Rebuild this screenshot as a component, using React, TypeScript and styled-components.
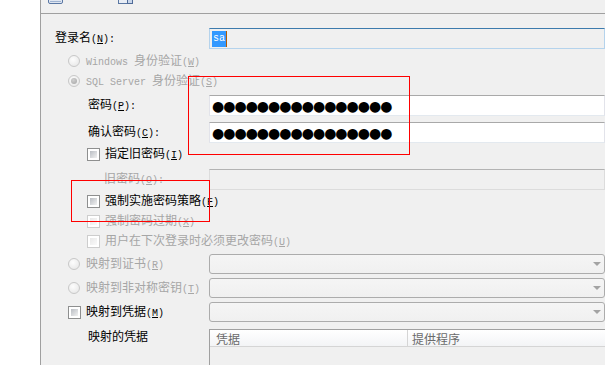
import styled, { createGlobalStyle } from 'styled-components';

const GlobalStyle = createGlobalStyle`
  html, body {
    margin: 0;
    padding: 0;
    background: #fff;
  }
  body {
    color: #000;
    font-family: "Noto Sans CJK SC", "Noto Sans", sans-serif;
    font-size: 12px;
    line-height: 14px;
  }
`;

const Window = styled.div`
  background: #fff;
  display: flex;
  height: 365px;
  overflow: hidden;
  position: relative;
  width: 605px;
`;

const Gutter = styled.div`
  background: #fff;
  flex: none;
  width: 40px;
`;

const Panel = styled.div`
  background: #f0f0f0;
  border-left: 1px solid #a0a0a0;
  display: flex;
  flex: 1;
  flex-direction: column;
  min-width: 0;
`;

const Toolbar = styled.div`
  align-items: flex-start;
  border-bottom: 1px solid #a0a0a0;
  display: flex;
  flex: none;
  gap: 55px;
  height: 13px;
  overflow: hidden;
  padding-left: 7px;
`;

const ToolIcon = styled.svg`
  flex: none;
  margin-top: -12px;
`;

const Form = styled.div`
  display: flex;
  flex: 1;
  flex-direction: column;
  padding-top: 14px;
`;

const Row = styled.div<{ $h: number; $mt: number }>`
  align-items: center;
  display: flex;
  flex: none;
  height: ${({ $h }) => $h}px;
  margin-top: ${({ $mt }) => $mt}px;
`;

const Lead = styled.div<{ $indent: number; $wide?: boolean; $top?: boolean }>`
  align-items: center;
  align-self: ${({ $top }) => ($top ? 'flex-start' : 'center')};
  box-sizing: border-box;
  display: flex;
  flex: none;
  gap: 5px;
  padding-left: ${({ $indent }) => $indent}px;
  white-space: nowrap;
  width: ${({ $wide }) => ($wide ? 'auto' : '168px')};
`;

const Text = styled.span<{ $disabled?: boolean }>`
  color: ${({ $disabled }) => ($disabled ? '#a6a6a6' : '#000')};
`;

const Lat = styled.span`
  font-family: "Liberation Mono", monospace;
  font-size: 10px;
`;

const Check = styled.span<{ $disabled?: boolean }>`
  background: #fff;
  border: 1px solid ${({ $disabled }) => ($disabled ? '#cdcdcd' : '#8e8f8f')};
  box-sizing: border-box;
  flex: none;
  height: 13px;
  padding: 2px;
  width: 13px;

  &::before {
    background: ${({ $disabled }) =>
      $disabled
        ? 'linear-gradient(135deg, #e8e8e8, #fafafa)'
        : 'linear-gradient(135deg, #b9bdc3, #f2f2f2)'};
    content: '';
    display: block;
    height: 100%;
    width: 100%;
  }
`;

const Radio = styled.span<{ $checked?: boolean }>`
  align-items: center;
  background: radial-gradient(circle at 40% 35%, #fdfdfd, #e4e4e4);
  border: 1px solid #c8c8c8;
  border-radius: 50%;
  box-sizing: border-box;
  display: flex;
  flex: none;
  height: 12px;
  justify-content: center;
  margin-right: 1px;
  width: 12px;

  &::after {
    background: radial-gradient(circle at 40% 35%, #d0d0d0, #a4a4a4);
    border-radius: 50%;
    content: '';
    display: ${({ $checked }) => ($checked ? 'block' : 'none')};
    height: 6px;
    width: 6px;
  }
`;

const TextBox = styled.div<{ $variant: 'focus' | 'normal' | 'disabled' }>`
  align-items: center;
  align-self: stretch;
  background: ${({ $variant }) => ($variant === 'normal' ? '#fff' : '#f0f0f0')};
  border: 1px solid;
  border-color: ${({ $variant }) =>
    $variant === 'focus'
      ? '#3d7bad #b5d3ec #b5d3ec #b5d3ec'
      : $variant === 'normal'
        ? '#a9a9a9 #e2e3ea #e3e9ef #e2e3ea'
        : '#b3b3b3 #dcdcdc #dcdcdc #dcdcdc'};
  box-sizing: border-box;
  display: flex;
  flex: 1;
  padding-left: 2px;
`;

const Selected = styled.span`
  background: #3399ff;
  color: #fff;
  font-family: "Liberation Mono", monospace;
  font-size: 10px;
  height: 16px;
  line-height: 16px;
  padding: 0 1px 0 1px;
  position: relative;

  &::after {
    background: #b35a00;
    content: '';
    height: 16px;
    position: absolute;
    right: -1px;
    top: 0;
    width: 1px;
  }
`;

const Dots = styled.span`
  font-family: "DejaVu Sans", sans-serif;
  font-size: 14px;
  letter-spacing: -1px;
  line-height: 16px;
`;

const Combo = styled.div`
  align-items: center;
  align-self: stretch;
  background: linear-gradient(#f5f5f5, #f0f0f0);
  border: 1px solid #acacac;
  border-radius: 3px;
  box-sizing: border-box;
  display: flex;
  flex: 1;
  justify-content: flex-end;
  padding-right: 3px;
`;

const Arrow = styled.span`
  border-left: 4px solid transparent;
  border-right: 4px solid transparent;
  border-top: 4px solid #a3a3a3;
  height: 0;
  width: 0;
`;

const List = styled.div`
  align-self: stretch;
  background: #f0f0f0;
  border-left: 1px solid #a0a0a0;
  border-top: 1px solid #a0a0a0;
  flex: 1;
`;

const ListHead = styled.div`
  background: linear-gradient(#ffffff, #f3f4f6);
  border-bottom: 1px solid #d5d5d5;
  display: flex;
  height: 16px;
`;

const HeadCell = styled.div<{ $w?: number; $pad: number }>`
  border-right: ${({ $w }) => ($w ? '1px solid #d5d5d5' : 'none')};
  box-sizing: border-box;
  color: #6a6a6a;
  flex: ${({ $w }) => ($w ? 'none' : '1')};
  line-height: 17px;
  padding-left: ${({ $pad }) => $pad}px;
  width: ${({ $w }) => ($w ? `${$w}px` : 'auto')};
`;

const Mark = styled.div`
  border: 1px solid #ff0000;
  box-sizing: border-box;
  pointer-events: none;
  position: absolute;
`;

const Key = ({ k, colon }: { k: string; colon?: boolean }) => (
  <Lat>
    (<u>{k}</u>){colon ? ':' : ''}
  </Lat>
);

const DocIcon = () => (
  <ToolIcon width="15" height="16" viewBox="0 0 15 16">
    <rect x="0.5" y="3.5" width="14" height="12" rx="1.5" fill="#dfe6f1" stroke="#5a77a3" />
    <rect x="2" y="13" width="11" height="1" fill="#9fb3d1" />
  </ToolIcon>
);

const ScriptIcon = () => (
  <ToolIcon width="15" height="16" viewBox="0 0 15 16">
    <rect x="0.5" y="2.5" width="10" height="13" fill="#e8edf5" stroke="#5a77a3" />
    <rect x="9.5" y="8.5" width="5" height="7" fill="#c9d6ea" stroke="#4f6b98" />
  </ToolIcon>
);

export default function App() {
  return (
    <>
      <GlobalStyle />
      <Window>
        <Gutter />
        <Panel>
          <Toolbar>
            <DocIcon />
            <ScriptIcon />
          </Toolbar>
          <Form>
            <Row $h={21} $mt={0}>
              <Lead $indent={14}>
                <Text>
                  登录名<Key k="N" colon />
                </Text>
              </Lead>
              <TextBox $variant="focus">
                <Selected>sa</Selected>
              </TextBox>
            </Row>

            <Row $h={20} $mt={2}>
              <Lead $indent={27} $wide>
                <Radio />
                <Text $disabled>
                  <Lat>Windows </Lat>身份验证<Key k="W" />
                </Text>
              </Lead>
            </Row>

            <Row $h={20} $mt={0}>
              <Lead $indent={27} $wide>
                <Radio $checked />
                <Text $disabled>
                  <Lat>SQL Server </Lat>身份验证<Key k="S" />
                </Text>
              </Lead>
            </Row>

            <Row $h={21} $mt={4}>
              <Lead $indent={47}>
                <Text>
                  密码<Key k="P" colon />
                </Text>
              </Lead>
              <TextBox $variant="normal">
                <Dots>●●●●●●●●●●●●●●●●</Dots>
              </TextBox>
            </Row>

            <Row $h={21} $mt={6}>
              <Lead $indent={47}>
                <Text>
                  确认密码<Key k="C" colon />
                </Text>
              </Lead>
              <TextBox $variant="normal">
                <Dots>●●●●●●●●●●●●●●●●</Dots>
              </TextBox>
            </Row>

            <Row $h={20} $mt={1}>
              <Lead $indent={46} $wide>
                <Check />
                <Text>
                  指定旧密码<Key k="I" />
                </Text>
              </Lead>
            </Row>

            <Row $h={21} $mt={5}>
              <Lead $indent={63}>
                <Text $disabled>
                  旧密码<Key k="O" colon />
                </Text>
              </Lead>
              <TextBox $variant="disabled" />
            </Row>

            <Row $h={20} $mt={1}>
              <Lead $indent={46} $wide>
                <Check />
                <Text>
                  强制实施密码策略<Key k="F" />
                </Text>
              </Lead>
            </Row>

            <Row $h={20} $mt={0}>
              <Lead $indent={46} $wide>
                <Check $disabled />
                <Text $disabled>
                  强制密码过期<Key k="X" />
                </Text>
              </Lead>
            </Row>

            <Row $h={20} $mt={0}>
              <Lead $indent={46} $wide>
                <Check $disabled />
                <Text $disabled>
                  用户在下次登录时必须更改密码<Key k="U" />
                </Text>
              </Lead>
            </Row>

            <Row $h={20} $mt={3}>
              <Lead $indent={27}>
                <Radio />
                <Text $disabled>
                  映射到证书<Key k="R" />
                </Text>
              </Lead>
              <Combo>
                <Arrow />
              </Combo>
            </Row>

            <Row $h={20} $mt={4}>
              <Lead $indent={27}>
                <Radio />
                <Text $disabled>
                  映射到非对称密钥<Key k="T" />
                </Text>
              </Lead>
              <Combo>
                <Arrow />
              </Combo>
            </Row>

            <Row $h={20} $mt={4}>
              <Lead $indent={27}>
                <Check />
                <Text>
                  映射到凭据<Key k="M" />
                </Text>
              </Lead>
              <Combo>
                <Arrow />
              </Combo>
            </Row>

            <Row $h={44} $mt={7}>
              <Lead $indent={47} $top>
                <Text>映射的凭据</Text>
              </Lead>
              <List>
                <ListHead>
                  <HeadCell $w={198} $pad={6}>
                    凭据
                  </HeadCell>
                  <HeadCell $pad={4}>提供程序</HeadCell>
                </ListHead>
              </List>
            </Row>
          </Form>
        </Panel>
        <Mark style={{ left: 188, top: 76, width: 222, height: 79 }} />
        <Mark style={{ left: 71, top: 180, width: 139, height: 42 }} />
      </Window>
    </>
  );
}
